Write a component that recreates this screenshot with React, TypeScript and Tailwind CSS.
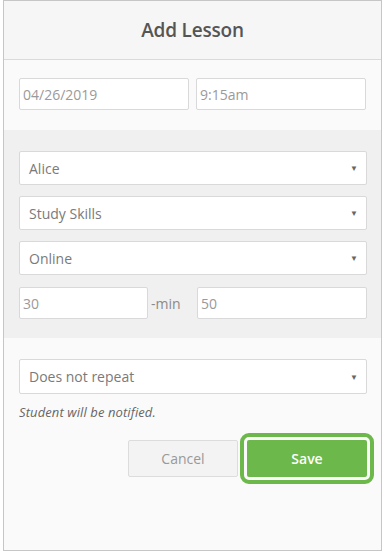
export default function App() {
  const selects = ['Alice', 'Study Skills', 'Online'];

  return (
    <div className="w-[385px] h-[557px] bg-white font-['Open_Sans',sans-serif]">
      <div className="ml-[3px] w-[379px] h-[551px] border border-[#c6c6c6] bg-[#fafafa] flex flex-col">
        {/* Header */}
        <div className="h-[59px] shrink-0 border-b border-[#dadada] bg-[#f6f6f6] flex items-center justify-center">
          <h1 className="text-[19px] font-semibold text-[#555] tracking-[-0.2px]">Add Lesson</h1>
        </div>

        {/* Date + time */}
        <div className="pl-[15px] pr-[14px] pt-[18px] pb-[20px] flex gap-[7px]">
          <div className="w-[170px] h-[32px] bg-white border border-[#d9d9d9] rounded-[2px] flex items-center pl-[3px] text-[14px] text-[#9a9a9a]">
            04/26/2019
          </div>
          <div className="w-[170px] h-[32px] bg-white border border-[#d9d9d9] rounded-[2px] flex items-center pl-[3px] text-[14px] text-[#9a9a9a]">
            9:15am
          </div>
        </div>

        {/* Lesson details */}
        <div className="bg-[#f0f0f0] pl-[15px] pr-[14px] pt-[21px] pb-[19px] flex flex-col gap-[11px]">
          {selects.map((s) => (
            <div
              key={s}
              className="h-[34px] bg-white border border-[#d9d9d9] rounded-[2px] flex items-center justify-between pl-[9px] pr-[8px] text-[14px] text-[#7a7a7a]"
            >
              <span>{s}</span>
              <span className="text-[8px] text-[#666]">▼</span>
            </div>
          ))}
          <div className="flex items-center mt-[1px]">
            <div className="w-[129px] h-[32px] bg-white border border-[#d9d9d9] rounded-[2px] flex items-center pl-[3px] text-[14px] text-[#9a9a9a]">
              30
            </div>
            <span className="ml-[3px] text-[14px] text-[#8a8a8a]">-min</span>
            <div className="ml-auto w-[170px] h-[32px] bg-white border border-[#d9d9d9] rounded-[2px] flex items-center pl-[3px] text-[14px] text-[#9a9a9a]">
              50
            </div>
          </div>
        </div>

        {/* Repeat + actions */}
        <div className="pl-[15px] pr-[14px] pt-[21px]">
          <div className="h-[35px] bg-white border border-[#d9d9d9] rounded-[2px] flex items-center justify-between pl-[9px] pr-[8px] text-[14px] text-[#7a7a7a]">
            <span>Does not repeat</span>
            <span className="text-[8px] text-[#666]">▼</span>
          </div>
          <p className="mt-[9px] text-[13px] leading-[18px] italic text-[#666] tracking-[0.1px]">Student will be notified.</p>
          <div className="mt-[19px] flex justify-end gap-[9px]">
            <button className="w-[110px] h-[37px] bg-[#f3f3f3] border border-[#dcdcdc] rounded-[2px] text-[14px] text-[#999]">
              Cancel
            </button>
            <button className="w-[120px] h-[37px] bg-[#6cb84a] rounded-[2px] text-[14px] font-semibold text-white outline-[4px] outline-solid outline-offset-[3px] outline-[#6cb84a]">
              Save
            </button>
          </div>
        </div>
      </div>
    </div>
  );
}
